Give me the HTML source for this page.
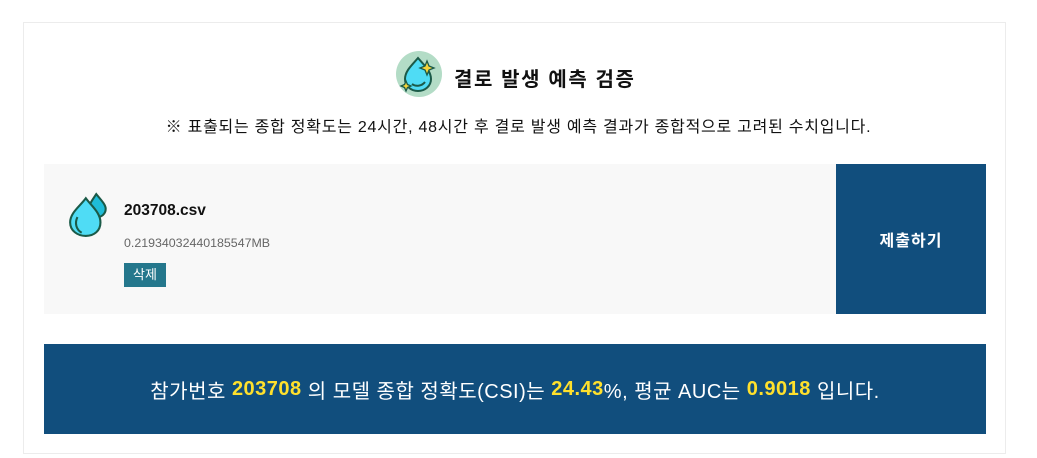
<!DOCTYPE html>
<html><head><meta charset="utf-8"><style>
body{margin:0;width:1037px;height:458px;background:#fff;font-family:"Liberation Sans","Noto Sans CJK KR",sans-serif;position:relative;overflow:hidden}
.card{position:absolute;left:23px;top:22px;width:983px;height:432px;border:1px solid #ececec;box-sizing:border-box}
.abs{position:absolute}
</style></head><body>
<div class="card"></div>
<svg class="abs" style="left:396px;top:51px" width="46" height="46" viewBox="0 0 46 46">
<circle cx="23" cy="23" r="23" fill="#b3dcc6"/>
<path d="M22 7 C16 14 9 20 9 28 C9 35 15 40 22 40 C29 40 35 35 35 28 C35 20 28 14 22 7Z" fill="#4fdcf5" stroke="#1b5a48" stroke-width="2"/>
<path d="M16 33 C20 36 26 35 29 31" fill="none" stroke="#1b5a48" stroke-width="2"/>
<path d="M31 10 L33 15 L38 17 L33 19 L31 24 L29 19 L24 17 L29 15Z" fill="#f5d33a" stroke="#1b5a48" stroke-width="1.3"/>
<path d="M10 30 L11.5 33.5 L15 35 L11.5 36.5 L10 40 L8.5 36.5 L5 35 L8.5 33.5Z" fill="#f5d33a" stroke="#1b5a48" stroke-width="1.3"/>
</svg>
<div class="abs" style="left:454px;top:63px;font-size:20px;font-weight:bold;color:#111;letter-spacing:1.6px">결로 발생 예측 검증</div>
<div class="abs" style="left:0;width:1037px;text-align:center;top:113px;font-size:16px;color:#111;letter-spacing:0.75px">※ 표출되는 종합 정확도는 24시간, 48시간 후 결로 발생 예측 결과가 종합적으로 고려된 수치입니다.</div>
<div class="abs" style="left:44px;top:164px;width:792px;height:150px;background:#f8f8f8"></div>
<div class="abs" style="left:836px;top:164px;width:150px;height:150px;background:#114e7d;color:#fff;font-weight:bold;font-size:16px;letter-spacing:1px;display:flex;align-items:center;justify-content:center">제출하기</div>
<svg class="abs" style="left:67px;top:192px" width="46" height="46" viewBox="0 0 42 44">
<path d="M27 2 C23 8 20 12 20 16 C20 21 24 24 28 24 C32 24 36 21 36 16 C36 12 31 7 27 2Z" fill="#1fbcd8" stroke="#1b5a48" stroke-width="2"/>
<path d="M17 6 C11 14 2 20 2 29 C2 37 9 42 17 42 C25 42 31 37 31 29 C31 20 23 14 17 6Z" fill="#4fdcf5" stroke="#1b5a48" stroke-width="2"/>
<path d="M9 24 C6 30 8 36 13 39" fill="none" stroke="#1b5a48" stroke-width="2"/>
</svg>
<div class="abs" style="left:124px;top:202px;font-size:15.5px;font-weight:bold;color:#111">203708.csv</div>
<div class="abs" style="left:124px;top:236px;font-size:12.4px;color:#666">0.21934032440185547MB</div>
<div class="abs" style="left:124px;top:263px;width:42px;height:24px;background:#24778c;color:#fff;font-size:13px;line-height:24px;text-align:center">삭제</div>
<div class="abs" style="left:44px;top:344px;width:942px;height:90px;background:#114e7d;color:#fff;font-size:20px;letter-spacing:0.5px;display:flex;align-items:center;justify-content:center">참가번호&nbsp;<b style="color:#ffe02c">203708</b>&nbsp;의 모델 종합 정확도(CSI)는&nbsp;<b style="color:#ffe02c">24.43</b>%, 평균 AUC는&nbsp;<b style="color:#ffe02c">0.9018</b>&nbsp;입니다.</div>
</body></html>
